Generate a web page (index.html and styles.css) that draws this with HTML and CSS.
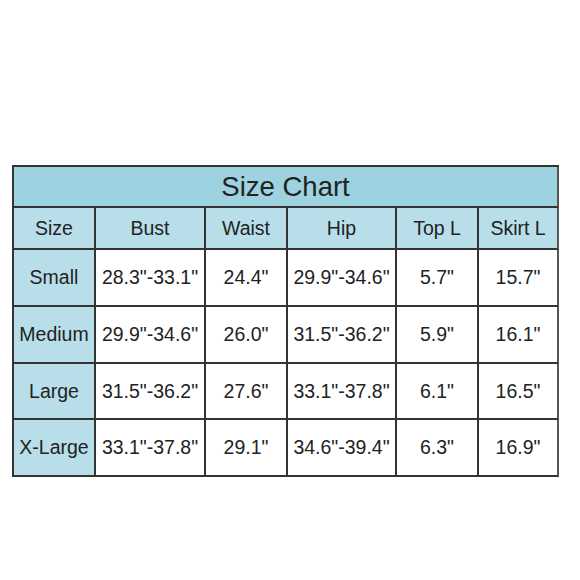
FILE: index.html
```html
<!DOCTYPE html>
<html>
<head>
<meta charset="utf-8">
<link rel="stylesheet" href="styles.css">
</head>
<body>
<table class="chart">
  <colgroup>
    <col class="c1"><col class="c2"><col class="c3"><col class="c4"><col class="c5"><col class="c6">
  </colgroup>
  <tr class="title-row"><th colspan="6" class="title">Size Chart</th></tr>
  <tr class="head-row">
    <th>Size</th><th>Bust</th><th>Waist</th><th>Hip</th><th>Top L</th><th>Skirt L</th>
  </tr>
  <tr class="row"><th>Small</th><td>28.3"-33.1"</td><td>24.4"</td><td>29.9"-34.6"</td><td>5.7"</td><td>15.7"</td></tr>
  <tr class="row"><th>Medium</th><td>29.9"-34.6"</td><td>26.0"</td><td>31.5"-36.2"</td><td>5.9"</td><td>16.1"</td></tr>
  <tr class="row row-short"><th>Large</th><td>31.5"-36.2"</td><td>27.6"</td><td>33.1"-37.8"</td><td>6.1"</td><td>16.5"</td></tr>
  <tr class="row"><th>X-Large</th><td>33.1"-37.8"</td><td>29.1"</td><td>34.6"-39.4"</td><td>6.3"</td><td>16.9"</td></tr>
</table>
</body>
</html>
```
FILE: styles.css
```css
html, body {
  margin: 0;
  padding: 0;
  background: #fff;
}
body {
  font-family: "Liberation Sans", Arial, sans-serif;
  color: #222;
}
.chart {
  margin: 165px 0 0 12px;
  width: 547px;
  table-layout: fixed;
  border-collapse: separate;
  border-spacing: 0;
  border-top: 2px solid #333;
  border-left: 2px solid #333;
}
.c1 { width: 82px; }
.c2 { width: 110px; }
.c3 { width: 82px; }
.c4 { width: 109px; }
.c5 { width: 82px; }
.c6 { width: 80px; }
.chart th, .chart td {
  border-right: 2px solid #333;
  border-bottom: 2px solid #333;
  padding: 0;
  text-align: center;
  font-weight: normal;
  font-size: 19.5px;
  white-space: nowrap;
  box-sizing: border-box;
}
.title-row { height: 41px; }
.head-row { height: 42px; }
.row { height: 57px; }
.chart .row-short { height: 56px; }
.chart .title {
  background: #9dd2e0;
  font-size: 27.5px;
}
.head-row th {
  background: #b8dfe9;
}
.row th {
  background: #b8dfe9;
}
.row td {
  background: #fff;
}
.chart th:last-child, .chart td:last-child { border-right-color: #555; }
```
